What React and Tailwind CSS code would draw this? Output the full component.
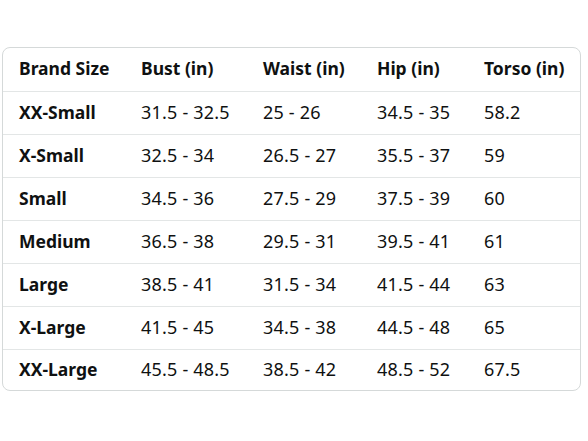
const HEAD = ['Brand Size', 'Bust (in)', 'Waist (in)', 'Hip (in)', 'Torso (in)'];
const ROWS = [
  ['XX-Small', '31.5 - 32.5', '25 - 26', '34.5 - 35', '58.2'],
  ['X-Small', '32.5 - 34', '26.5 - 27', '35.5 - 37', '59'],
  ['Small', '34.5 - 36', '27.5 - 29', '37.5 - 39', '60'],
  ['Medium', '36.5 - 38', '29.5 - 31', '39.5 - 41', '61'],
  ['Large', '38.5 - 41', '31.5 - 34', '41.5 - 44', '63'],
  ['X-Large', '41.5 - 45', '34.5 - 38', '44.5 - 48', '65'],
  ['XX-Large', '45.5 - 48.5', '38.5 - 42', '48.5 - 52', '67.5'],
];

const COLS = 'grid grid-cols-[122px_122px_114px_107px_1fr]';

export default function App() {
  return (
    <div className="w-[588px] h-[441px] bg-white pt-[47px] pl-[2px] pr-[7px]" style={{ fontFamily: '"Noto Sans", "Open Sans", sans-serif' }}>
      <div className="border border-[#d5d9d9] rounded-lg text-[#0f1111]">
        <div className={`${COLS} h-[43px] items-center font-bold text-[17.5px]`}>
          {HEAD.map(h => <div key={h} className="pl-[16px] pb-[2px]">{h}</div>)}
        </div>
        {ROWS.map((r, ri) => (
          <div key={r[0]} className={`${COLS} ${ri === ROWS.length - 1 ? 'h-[41px]' : 'h-[43px]'} items-center border-t border-[#e3e6e6]`}>
            {r.map((c, i) => (
              <div key={i} className={`pl-[16px] pb-[2px] ${i === 0 ? 'font-bold text-[17.5px]' : 'text-[18px] tracking-[0.2px]'}`}>{c}</div>
            ))}
          </div>
        ))}
      </div>
    </div>
  );
}
